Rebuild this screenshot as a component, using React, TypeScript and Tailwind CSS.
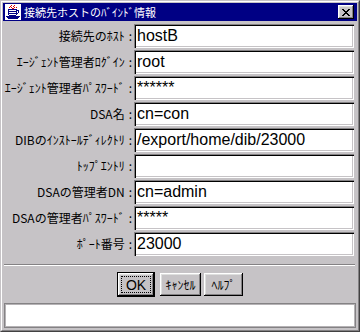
import React from "react";

const rows = [
  { label: "接続先のﾎｽﾄ", value: "hostB" },
  { label: "ｴｰｼﾞｪﾝﾄ管理者ﾛｸﾞｲﾝ", value: "root" },
  { label: "ｴｰｼﾞｪﾝﾄ管理者ﾊﾟｽﾜｰﾄﾞ", value: "******" },
  { label: "DSA名", value: "cn=con" },
  { label: "DIBのｲﾝｽﾄｰﾙﾃﾞｨﾚｸﾄﾘ", value: "/export/home/dib/23000" },
  { label: "ﾄｯﾌﾟｴﾝﾄﾘ", value: "" },
  { label: "DSAの管理者DN", value: "cn=admin" },
  { label: "DSAの管理者ﾊﾟｽﾜｰﾄﾞ", value: "*****" },
  { label: "ﾎﾟｰﾄ番号", value: "23000" },
];

const raised =
  "shadow-[inset_-1px_-1px_0_#000,inset_1px_1px_0_#fff,inset_-2px_-2px_0_#848284,inset_2px_2px_0_#dedfde]";

const CupIcon = () => (
  <svg width="16" height="16" viewBox="0 0 16 16" shapeRendering="crispEdges">
    <rect x="0" y="0" width="16" height="16" fill="#fff" />
    <path d="M6 1h1v1h-1zM5 2h1v1h-1zM6 3h1v1h-1zM9 1h1v1h-1zM8 2h1v1h-1zM9 3h1v1h-1zM4 3h1v1h-1zM11 3h1v1h-1zM7 4h2v1h-2z" fill="#e00000" />
    <path d="M3 5h9v1h-9zM3 6h1v5h-1zM11 6h1v5h-1zM4 11h7v1h-7zM12 6h2v1h-2zM13 7h1v2h-1zM12 9h1v1h-1zM4 7h7v1h-7zM4 9h7v1h-7z" fill="#000084" />
    <path d="M1 12h14v1h-14zM2 13h12v1h-12zM3 14h10v1h-10z" fill="#000084" />
  </svg>
);

const CloseGlyph = () => (
  <svg width="8" height="7" viewBox="0 0 8 7" shapeRendering="crispEdges">
    <path d="M0 0h2v1h-2zM6 0h2v1h-2zM1 1h2v1h-2zM5 1h2v1h-2zM2 2h4v1h-4zM3 3h2v1h-2zM2 4h4v1h-4zM1 5h2v1h-2zM5 5h2v1h-2zM0 6h2v1h-2zM6 6h2v1h-2z" fill="#000" />
  </svg>
);

export default function App() {
  return (
    <div
      className="w-[360px] h-[332px] border border-t-[#c6c3c6] border-l-[#c6c3c6] border-r-[#424142] border-b-[#424142] bg-[#c6c3c6]"
      style={{ fontFamily: '"Noto Sans CJK JP", sans-serif' }}
    >
      <div className="h-full border border-t-white border-l-white border-r-[#848284] border-b-[#848284] p-[1px] flex flex-col">
        {/* title bar */}
        <div className="h-[18px] bg-[#000084] flex items-center pl-[2px] pr-[3px]">
          <CupIcon />
          <span className="ml-[3px] text-[11px] leading-none text-white">接続先ホストのﾊﾞｲﾝﾄﾞ情報</span>
          <div className={`ml-auto w-[16px] h-[14px] bg-[#c6c3c6] flex items-center justify-center ${raised}`}>
            <CloseGlyph />
          </div>
        </div>

        {/* fields */}
        <div className="flex flex-col gap-[2px] pt-[3px]">
          {rows.map((r) => (
            <div key={r.label} className="flex h-[24px] items-center">
              <div className="w-[131px] flex justify-end items-center pr-[2px] text-[12px] leading-none text-black whitespace-nowrap">
                <span>{r.label}</span>
                <span className="ml-[4px]">:</span>
              </div>
              <div
                className="w-[220px] h-[24px] bg-white flex items-center pl-[3px] text-[16px] text-black shadow-[inset_1px_1px_0_#848284,inset_2px_2px_0_#000,inset_-1px_-1px_0_#fff,inset_-2px_-2px_0_#c6c3c6]"
                style={{ fontFamily: '"Liberation Sans", Arial, sans-serif' }}
              >
                {r.value}
              </div>
            </div>
          ))}
        </div>

        {/* separator */}
        <div className="mt-[8px] ml-[1px] w-[351px] h-[2px] border-t border-t-[#848284] border-b border-b-white" />

        {/* buttons */}
        <div className="mt-[6px] flex justify-center items-start">
          <div className="w-[38px] h-[25px] border border-black bg-[#c6c3c6] flex">
            <div className={`flex-1 flex p-[3px] ${raised}`}>
              <span
                className="flex-1 border border-dotted border-black flex items-center justify-center text-[14px] leading-none text-black"
                style={{ fontFamily: '"Liberation Sans", Arial, sans-serif' }}
              >
                OK
              </span>
            </div>
          </div>
          <div className={`ml-[5px] mt-[1px] w-[41px] h-[23px] bg-[#c6c3c6] flex items-center justify-center text-[12px] leading-none text-black ${raised}`}>
            ｷｬﾝｾﾙ
          </div>
          <div className={`ml-[3px] mt-[1px] w-[39px] h-[23px] bg-[#c6c3c6] flex items-center justify-center text-[12px] leading-none text-black ${raised}`}>
            ﾍﾙﾌﾟ
          </div>
        </div>

        {/* status area */}
        <div className="mt-[6px] ml-[1px] w-[352px] h-[25px] bg-white shadow-[inset_0_0_0_1px_#848284,inset_0_0_0_2px_#b5b2b5]" />
      </div>
    </div>
  );
}
